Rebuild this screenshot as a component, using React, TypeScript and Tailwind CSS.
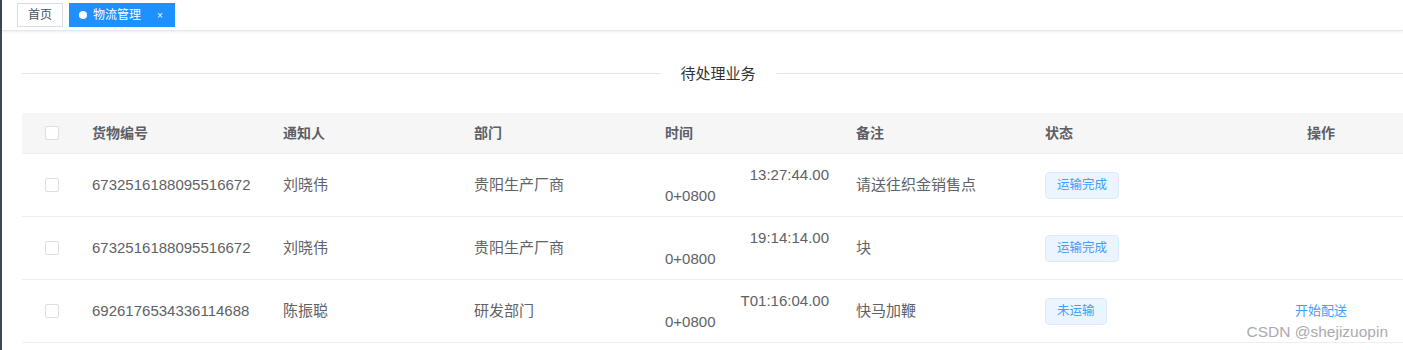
const rows = [
  { id: '6732516188095516672', who: '刘晓伟', dept: '贵阳生产厂商', time: '13:27:44.00', note: '请送往织金销售点', status: '运输完成', action: '' },
  { id: '6732516188095516672', who: '刘晓伟', dept: '贵阳生产厂商', time: '19:14:14.00', note: '块', status: '运输完成', action: '' },
  { id: '6926176534336114688', who: '陈振聪', dept: '研发部门', time: 'T01:16:04.00', note: '快马加鞭', status: '未运输', action: '开始配送' },
];

function Checkbox() {
  return <span className="block w-[14px] h-[14px] rounded-[2px] border border-[#dcdfe6] bg-white" />;
}

export default function App() {
  return (
    <div
      className="relative flex w-[1403px] h-[350px] overflow-hidden bg-white text-[#606266]"
      style={{ fontFamily: '"Liberation Sans", "Noto Sans CJK SC", sans-serif' }}
    >
      <div className="w-[2px] shrink-0 bg-[#3b4656]" />
      <div className="flex-1 min-w-0">
        {/* tags bar */}
        <div className="h-[31px] flex items-center gap-[6px] pl-[15px] border-b border-[#e4e7ed] shadow-[0_1px_3px_rgba(0,0,0,0.08)]">
          <div className="h-[24px] px-[10px] flex items-center border border-[#d8dce5] text-[12px] text-[#495060]">首页</div>
          <div className="h-[24px] w-[106px] pl-[10px] flex items-center gap-[6px] bg-[#1e90ff] text-white text-[12px]">
            <span className="w-[8px] h-[8px] rounded-full bg-white" />
            <span>物流管理</span>
            <span className="ml-[10px] text-[10px]">×</span>
          </div>
        </div>

        <div className="pl-[20px] pt-[42px]">
          {/* divider */}
          <div className="relative w-[1392px] h-px bg-[#e4e7ed]">
            <span className="absolute left-1/2 top-1/2 -translate-x-1/2 -translate-y-1/2 bg-white px-[20px] text-[15px] text-[#303133] whitespace-nowrap">
              待处理业务
            </span>
          </div>

          {/* table */}
          <div className="mt-[39px] w-[1392px] text-[15px]">
            <div className="flex h-[41px] items-center bg-[#f6f6f7] border-b border-[#ebeef5] text-[14px] font-bold text-[#5c5f66]">
              <div className="w-[60px] flex justify-center"><Checkbox /></div>
              <div className="w-[191px] px-[10px]">货物编号</div>
              <div className="w-[191px] px-[10px]">通知人</div>
              <div className="w-[191px] px-[10px]">部门</div>
              <div className="w-[191px] px-[10px]">时间</div>
              <div className="w-[191px] px-[10px]">备注</div>
              <div className="w-[191px] px-[8px]">状态</div>
              <div className="flex-1 text-center">操作</div>
            </div>
            {rows.map((r, i) => (
              <div key={i} className="flex h-[63px] items-center border-b border-[#ebeef5]">
                <div className="w-[60px] flex justify-center"><Checkbox /></div>
                <div className="w-[191px] px-[10px]">{r.id}</div>
                <div className="w-[191px] px-[10px]">{r.who}</div>
                <div className="w-[191px] px-[10px]">{r.dept}</div>
                <div className="w-[191px] px-[10px] leading-[21px]">
                  <div className="w-[164px] text-right">{r.time}</div>
                  <div>0+0800</div>
                </div>
                <div className="w-[191px] px-[10px]">{r.note}</div>
                <div className="w-[191px] px-[8px]">
                  <span className="inline-flex h-[27px] items-center px-[11px] rounded-[4px] border border-[#d9ecff] bg-[#ecf5ff] text-[12.5px] text-[#409eff]">
                    {r.status}
                  </span>
                </div>
                <div className="flex-1 text-center text-[13px] text-[#409eff]">{r.action}</div>
              </div>
            ))}
          </div>
        </div>
      </div>
      <span className="absolute right-[15px] bottom-[7px] text-[15.5px] text-[#ababab] [text-shadow:0_0_2px_#fff]">
        CSDN @shejizuopin
      </span>
    </div>
  );
}
